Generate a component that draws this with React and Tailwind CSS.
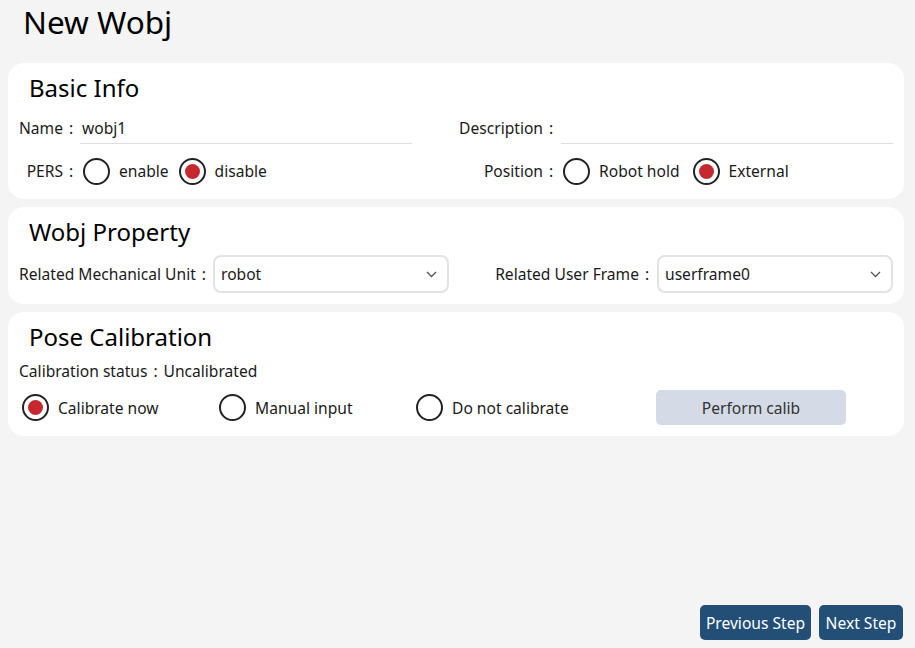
import React from "react";

const FONT = { fontFamily: '"Noto Sans", "Noto Sans CJK SC", sans-serif' };

function Colon() {
  return <span className="inline-block w-[16px] text-center">:</span>;
}

function Radio({ checked, label }) {
  return (
    <div className="flex items-center">
      <span className="flex h-[27px] w-[27px] shrink-0 items-center justify-center rounded-full border-2 border-[#222]">
        {checked && <span className="h-[15px] w-[15px] rounded-full bg-[#c62830]" />}
      </span>
      <span className="ml-[9px] pt-[2px]">{label}</span>
    </div>
  );
}

function Select({ value }) {
  return (
    <div className="flex h-[38px] w-[236px] items-center justify-between rounded-[8px] border-2 border-[#e3e3e3] pl-[6px] pr-[10px]">
      <span className="pt-[2px]">{value}</span>
      <svg width="11" height="7" viewBox="0 0 11 7" fill="none">
        <path d="M1 1l4.5 4.5L10 1" stroke="#555" strokeWidth="1.3" />
      </svg>
    </div>
  );
}

function Card({ title, children }) {
  return (
    <section className="rounded-2xl bg-white px-[11px] pt-[9px]">
      <h2 className="h-[32px] pl-[10px] text-[24px] leading-[32px] text-black">{title}</h2>
      {children}
    </section>
  );
}

export default function App() {
  return (
    <div
      className="flex h-[648px] w-[915px] flex-col bg-[#f4f4f4] pl-[8px] pr-[11px] text-[15.6px] text-[#1a1a1a]"
      style={FONT}
    >
      <h1 className="mb-[19px] h-[44px] pl-[15px] text-[31.5px] leading-[44px] text-black">New Wobj</h1>

      <div className="flex flex-col gap-[8px]">
        <Card title="Basic Info">
          <div className="mt-[8px] grid h-[32px] grid-cols-[440px_1fr]">
            <div className="flex items-stretch">
              <span className="flex w-[60px] items-center justify-end whitespace-nowrap pt-[2px]">
                Name
                <Colon />
              </span>
              <div className="ml-[1px] flex w-[332px] items-center border-b border-[#dedede] pl-[2px] pt-[2px]">
                wobj1
              </div>
            </div>
            <div className="flex items-stretch">
              <span className="flex w-[100px] items-center justify-end whitespace-nowrap pt-[2px]">
                Description
                <Colon />
              </span>
              <div className="ml-[2px] w-[332px] border-b border-[#dedede]" />
            </div>
          </div>
          <div className="mt-[13px] grid h-[28px] grid-cols-[440px_1fr]">
            <div className="flex items-center">
              <span className="flex w-[60px] justify-end whitespace-nowrap pt-[2px]">
                PERS
                <Colon />
              </span>
              <div className="ml-[4px] flex items-center gap-[10px]">
                <Radio label="enable" />
                <Radio checked label="disable" />
              </div>
            </div>
            <div className="flex items-center">
              <span className="flex w-[100px] justify-end whitespace-nowrap pt-[2px]">
                Position
                <Colon />
              </span>
              <div className="ml-[4px] flex items-center gap-[13px]">
                <Radio label="Robot hold" />
                <Radio checked label="External" />
              </div>
            </div>
          </div>
          <div className="h-[14px]" />
        </Card>

        <Card title="Wobj Property">
          <div className="mt-[7px] flex items-center justify-between">
            <div className="flex items-center">
              <span className="flex w-[194px] items-center whitespace-nowrap pt-[2px]">
                Related Mechanical Unit
                <Colon />
              </span>
              <Select value="robot" />
            </div>
            <div className="flex items-center">
              <span className="flex items-center whitespace-nowrap pt-[2px]">
                Related User Frame
                <Colon />
              </span>
              <div className="ml-[2px]">
                <Select value="userframe0" />
              </div>
            </div>
          </div>
          <div className="h-[11px]" />
        </Card>

        <Card title="Pose Calibration">
          <div className="mt-[8px] flex h-[20px] items-center pt-[2px]">
            Calibration status
            <Colon />
            <span>Uncalibrated</span>
          </div>
          <div className="mt-[9px] flex h-[35px] items-center pl-[3px]">
            <div className="w-[197px]">
              <Radio checked label="Calibrate now" />
            </div>
            <div className="w-[197px]">
              <Radio label="Manual input" />
            </div>
            <div className="w-[197px]">
              <Radio label="Do not calibrate" />
            </div>
            <button className="ml-[43px] h-[35px] w-[190px] rounded-[5px] bg-[#d4dbe6] pt-[2px] text-[#333]">
              Perform calib
            </button>
          </div>
          <div className="h-[11px]" />
        </Card>
      </div>

      <div className="flex-1" />

      <div className="flex justify-end gap-[8px] pb-[8px] pr-[1px]">
        <button className="h-[35px] w-[111px] rounded-[5px] bg-[#234f77] pt-[2px] text-[15.6px] text-white">
          Previous Step
        </button>
        <button className="h-[35px] w-[84px] rounded-[5px] bg-[#234f77] pt-[2px] text-[15.6px] text-white">
          Next Step
        </button>
      </div>
    </div>
  );
}
